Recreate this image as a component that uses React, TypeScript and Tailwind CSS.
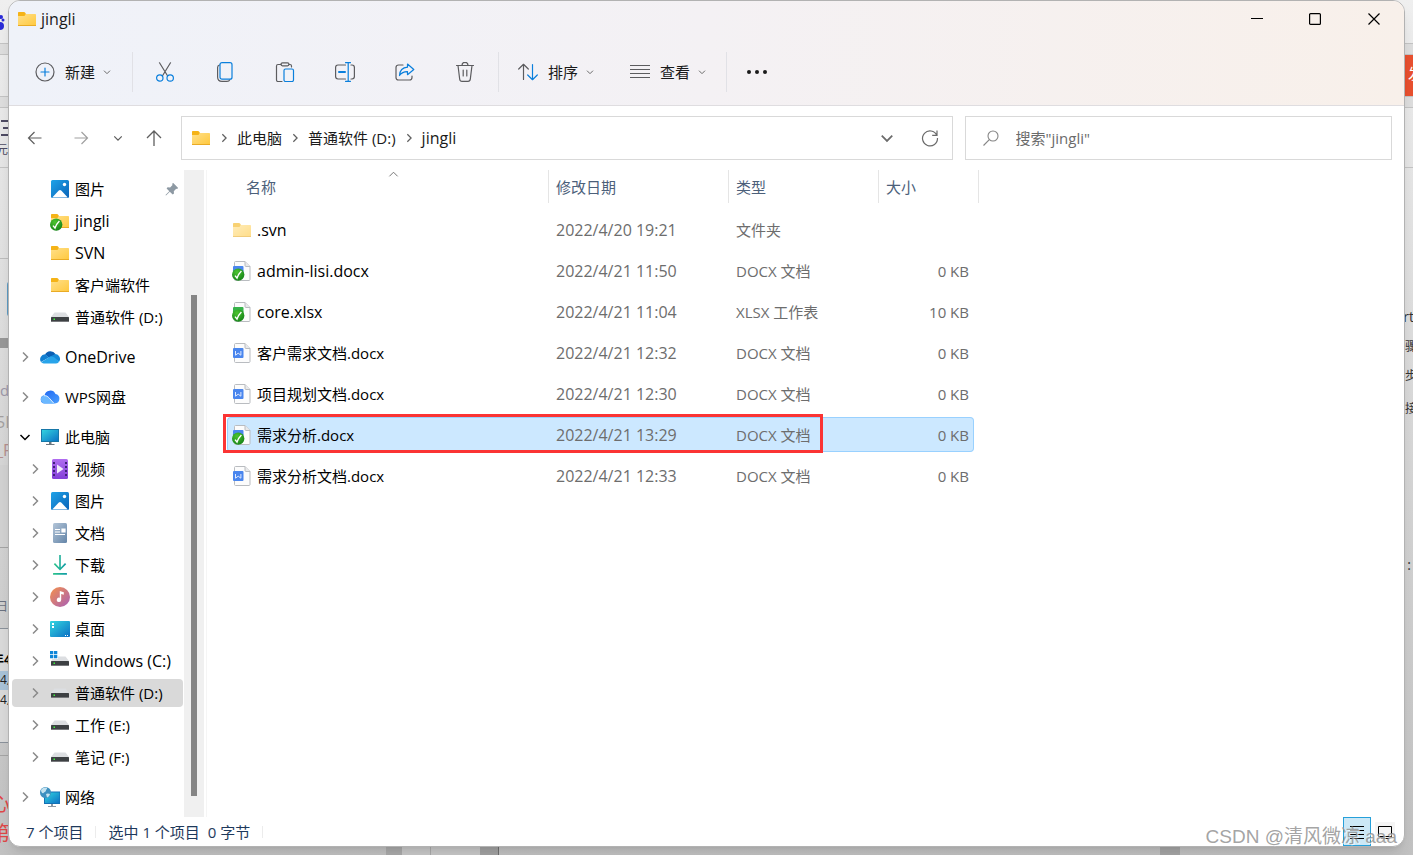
import type { ReactNode } from "react";

type Badge = "none" | "synced";
type FileKind = "folder" | "docx" | "xlsx";

interface FileRow {
  name: string;
  date: string;
  type: string;
  size: string;
  kind: FileKind;
  badge?: Badge;
  selected?: boolean;
}

interface TreeRow {
  label: string;
  icon: ReactNode;
  nested?: boolean;
  arrow?: "right" | "down";
  selected?: boolean;
  pinned?: boolean;
}

const files: FileRow[] = [
  { name: ".svn", date: "2022/4/20 19:21", type: "文件夹", size: "", kind: "folder" },
  { name: "admin-lisi.docx", date: "2022/4/21 11:50", type: "DOCX 文档", size: "0 KB", kind: "docx", badge: "synced" },
  { name: "core.xlsx", date: "2022/4/21 11:04", type: "XLSX 工作表", size: "10 KB", kind: "xlsx", badge: "synced" },
  { name: "客户需求文档.docx", date: "2022/4/21 12:32", type: "DOCX 文档", size: "0 KB", kind: "docx" },
  { name: "项目规划文档.docx", date: "2022/4/21 12:30", type: "DOCX 文档", size: "0 KB", kind: "docx" },
  { name: "需求分析.docx", date: "2022/4/21 13:29", type: "DOCX 文档", size: "0 KB", kind: "docx", badge: "synced", selected: true },
  { name: "需求分析文档.docx", date: "2022/4/21 12:33", type: "DOCX 文档", size: "0 KB", kind: "docx" },
];

// labels without any Chinese characters are set one step larger
const latinSize = (s: string) => (/^[\x20-\x7e]+$/.test(s) ? "text-[16px]" : "");

/* ---------- icons ---------- */

function Gradients() {
  return (
    <svg width="0" height="0" className="absolute" aria-hidden="true">
      <defs>
        <linearGradient id="gFolder" x1="0" y1="0" x2="1" y2="1">
          <stop offset="0" stopColor="#ffe08a" />
          <stop offset="1" stopColor="#ffc83d" />
        </linearGradient>
        <linearGradient id="gPicture" x1="0" y1="0" x2="1" y2="1">
          <stop offset="0" stopColor="#1fa3e8" />
          <stop offset="1" stopColor="#0a63b8" />
        </linearGradient>
        <linearGradient id="gScreen" x1="0" y1="0" x2="1" y2="1">
          <stop offset="0" stopColor="#33d6e0" />
          <stop offset="1" stopColor="#0b6fc4" />
        </linearGradient>
        <linearGradient id="gVideo" x1="0" y1="0" x2="0" y2="1">
          <stop offset="0" stopColor="#b06cf0" />
          <stop offset="1" stopColor="#8340d8" />
        </linearGradient>
        <linearGradient id="gDoc" x1="0" y1="0" x2="1" y2="1">
          <stop offset="0" stopColor="#b3c5d8" />
          <stop offset="1" stopColor="#6485a8" />
        </linearGradient>
        <linearGradient id="gMusic" x1="0" y1="0" x2="1" y2="1">
          <stop offset="0" stopColor="#f5914a" />
          <stop offset="1" stopColor="#a85fb8" />
        </linearGradient>
        <linearGradient id="gDown" x1="0" y1="0" x2="1" y2="0">
          <stop offset="0" stopColor="#2cc48a" />
          <stop offset="1" stopColor="#0f9aa8" />
        </linearGradient>
        <radialGradient id="gCheck" cx="0.4" cy="0.3" r="0.8">
          <stop offset="0" stopColor="#4cc42f" />
          <stop offset="1" stopColor="#0f7d16" />
        </radialGradient>
        <linearGradient id="gWps" x1="0" y1="0" x2="1" y2="1">
          <stop offset="0" stopColor="#1c62f0" />
          <stop offset="1" stopColor="#4ba0ff" />
        </linearGradient>
      </defs>
    </svg>
  );
}

function CheckBadge() {
  return (
    <>
      <circle cx="6.2" cy="13.6" r="6.2" fill="url(#gCheck)" />
      <path d="M3 14.6l2 2.400c1-2.900 2.200-4.800 4.400-7" fill="none" stroke="#fff" strokeWidth="1.400" />
    </>
  );
}

function FolderIcon({ badge = "none", faded = false }: { badge?: Badge; faded?: boolean }) {
  return (
    <svg viewBox="0 0 20 20" className={faded ? "h-5 w-5 opacity-60" : "h-5 w-5"} aria-hidden="true">
      <path d="M1 4c0-.7.4-1 1-1h5c.5 0 .8.2 1 .5L9 5v4H1z" fill="#f5b317" />
      <path d="M1 7h6.500l1.200-2H18c.6 0 1 .4 1 1v11H1z" fill="url(#gFolder)" />
      <path d="M1 16h18v1H1z" fill="#e9ab25" />
      {badge === "synced" && <CheckBadge />}
    </svg>
  );
}

function FileIcon({ kind, badge = "none" }: { kind: FileKind; badge?: Badge }) {
  if (kind === "folder") return <FolderIcon faded />;
  return (
    <svg viewBox="0 0 20 20" className="h-5 w-5" aria-hidden="true">
      <path d="M2.500 1.500c0-.6.4-1 1-1H13l5 5v13c0 .6-.4 1-1 1H3.500c-.6 0-1-.4-1-1z" fill="#fcfcfc" stroke="#b9bcc0" />
      <path d="M13 .5v4c0 .6.4 1 1 1h4" fill="#e8e9eb" stroke="#b9bcc0" />
      <rect x="1" y="5" width="10.500" height="10" rx="1" fill={kind === "docx" ? "#4a86ee" : "#37b34a"} />
      {badge === "synced" ? (
        <CheckBadge />
      ) : (
        <path d="M3.500 8v4.200l2.700-2 2.700 2V8" fill="none" stroke="#dfeaff" strokeWidth="1" />
      )}
    </svg>
  );
}

function PictureIcon() {
  return (
    <svg viewBox="0 0 20 20" className="h-5 w-5" aria-hidden="true">
      <rect x="1" y="1" width="18" height="18" rx="1.500" fill="url(#gPicture)" />
      <path d="M2.200 18.600L8.800 11.400c.7-.7 1.700-.7 2.400 0l6.600 7.200z" fill="#fff" />
      <circle cx="14.500" cy="5.500" r="1.700" fill="#fff" />
    </svg>
  );
}

function DriveIcon({ system = false }: { system?: boolean }) {
  return (
    <svg viewBox="0 0 20 20" className="h-5 w-5" aria-hidden="true">
      <path d="M4.500 5.500h11L19 10H1z" fill="#dcdee1" />
      <rect x="1" y="10" width="18" height="5" rx=".5" fill="#3d4043" />
      <path d="M1 14h18v1H1z" fill="#77797c" />
      <rect x="3.500" y="11.500" width="1.500" height="1.500" fill="#3df03d" />
      {system && (
        <>
          <rect width="8" height="8" fill="#fff" />
          <path d="M0 0h3.300v3.300H0zM4 0h3.300v3.300H4zM0 4h3.300v3.300H0zM4 4h3.300v3.300H4z" fill="#0f86d8" />
        </>
      )}
    </svg>
  );
}

function OneDriveIcon() {
  return (
    <svg viewBox="0 0 20 20" className="h-5 w-5" aria-hidden="true">
      <path d="M5 7.500A6 6 0 0 1 15.500 7l-5 5z" fill="#0a5fb4" />
      <path d="M5 7.200A5 5 0 0 0 1 15l8-4.500z" fill="#1180d2" />
      <path d="M15.500 7a5 5 0 0 1 3.800 7.500L9 10z" fill="#1489d8" />
      <path d="M1.200 15.200L9.500 10c1.500-.7 3.300-.6 4.600.3l5 4.300c-.5 1.300-1.600 1.900-3.100 1.900H5c-1.600 0-3-.4-3.800-1.300z" fill="#28a4ea" />
    </svg>
  );
}

function WpsCloudIcon() {
  return (
    <svg viewBox="0 0 20 20" className="h-5 w-5" aria-hidden="true">
      <path d="M4.500 8.500A5.800 5.800 0 0 1 15.500 7 4.800 4.800 0 0 1 15 16.500H5A4 4 0 0 1 4.500 8.500z" fill="url(#gWps)" />
      <path d="M.8 12.300A4 4 0 0 1 8 10l6.500 6.500H5a4.200 4.200 0 0 1-4.200-4.200z" fill="#6bb8ff" />
      <path d="M4 8.700c2.300-.2 3.600.6 4.900 2l4.900 5.500" fill="none" stroke="#fff" strokeWidth=".8" />
    </svg>
  );
}

function PcIcon() {
  return (
    <svg viewBox="0 0 20 20" className="h-5 w-5" aria-hidden="true">
      <rect x="1.500" y="2.500" width="17" height="12" fill="url(#gScreen)" stroke="#1777a8" />
      <path d="M9 15h2.500v2H9zM6 17h8.500v1H6z" fill="#6b7680" />
    </svg>
  );
}

function VideoIcon() {
  return (
    <svg viewBox="0 0 20 20" className="h-5 w-5" aria-hidden="true">
      <rect x="2" width="16" height="20" rx="1.500" fill="url(#gVideo)" />
      <path d="M3 3h2v2H3zM3 7h2v2H3zM3 11h2v2H3zM3 15h2v2H3zM15 3h2v2h-2zM15 7h2v2h-2zM15 11h2v2h-2zM15 15h2v2h-2z" fill="#40207a" />
      <path d="M7 5.500l6.500 4.500L7 14.500z" fill="#f2ecfb" />
    </svg>
  );
}

function DocumentsIcon() {
  return (
    <svg viewBox="0 0 20 20" className="h-5 w-5" aria-hidden="true">
      <rect x="3" width="14" height="20" rx="1.500" fill="url(#gDoc)" />
      <path d="M5 6.500h5M5 9h5M5 11.500h10M12 6h3v3h-3z" stroke="#fff" strokeWidth="1.200" fill="#fff" />
    </svg>
  );
}

function DownloadIcon() {
  return (
    <svg viewBox="0 0 20 20" className="h-5 w-5" fill="url(#gDown)" aria-hidden="true">
      <path d="M9.200 0h1.600v12.500l4.200-4.400 1.200 1.100L10 15.600 3.800 9.200 5 8.100l4.200 4.400z" />
      <rect x="3" y="18" width="14" height="1.700" rx=".5" />
    </svg>
  );
}

function MusicIcon() {
  return (
    <svg viewBox="0 0 20 20" className="h-5 w-5" aria-hidden="true">
      <circle cx="10" cy="10" r="10" fill="url(#gMusic)" />
      <path d="M9.800 4l4 1.200v2.600l-2.600-.8v5.700a2.200 2.200 0 1 1-1.400-2z" fill="#fff" />
    </svg>
  );
}

function DesktopIcon() {
  return (
    <svg viewBox="0 0 20 20" className="h-5 w-5" aria-hidden="true">
      <rect y="2" width="20" height="16" rx="1" fill="url(#gScreen)" />
      <path d="M2 4h2v2H2zM2 7h2v2H2z" fill="#fff" />
      <path d="M15 16h1v1h-1zM17 16h1v1h-1z" fill="#fff" />
    </svg>
  );
}

function NetworkIcon() {
  return (
    <svg viewBox="0 0 20 20" className="h-5 w-5" aria-hidden="true">
      <rect x="4.500" y="5" width="15.500" height="11.500" fill="url(#gScreen)" stroke="#1371b5" />
      <path d="M11 17h2v2h-2zM8 19h8v1H8z" fill="#8a97a3" />
      <circle cx="5.500" cy="5.500" r="5.500" fill="#3d8fbf" />
      <path d="M1 3c2-2.500 5-3 6-2 .5 1-1 1.500-1 2.500S4.500 5 3.500 6 1 5 1 3zM6 7c1.500-1 3-.5 4 0-.5 2-1.500 3-3 3.500z" fill="#c4e2ef" />
    </svg>
  );
}

function Chevron({ dir, className }: { dir: "right" | "down" | "up"; className: string }) {
  const d = { right: "M4 1.500L8.500 6 4 10.500", down: "M1.500 4L6 8.500 10.500 4", up: "M1.500 8L6 3.500 10.500 8" }[dir];
  return (
    <svg viewBox="0 0 12 12" className={className} fill="none" stroke="currentColor" strokeWidth="1.500" aria-hidden="true">
      <path d={d} />
    </svg>
  );
}

/* thin two-tone glyphs of the command bar */
function ToolIcon({ children }: { children: ReactNode }) {
  return (
    <svg viewBox="0 0 20 20" className="h-5 w-5 shrink-0" fill="none" stroke="#5c5c5f" strokeWidth="1.200" strokeLinecap="round" strokeLinejoin="round" aria-hidden="true">
      {children}
    </svg>
  );
}

const blue = "#0a7fdc";

const tools = [
  {
    label: "剪切",
    icon: (
      <ToolIcon>
        <path d="M4.500.8l8 13M15.500.8l-8 13" />
        <circle cx="4.800" cy="16" r="3.200" stroke={blue} />
        <circle cx="15.200" cy="16" r="3.200" stroke={blue} />
      </ToolIcon>
    ),
  },
  {
    label: "复制",
    icon: (
      <ToolIcon>
        <path d="M4.500 3C3 3.400 2.600 4.300 2.600 5.500v9.500c0 3 1.400 4.400 4.400 4.400h5c1.400 0 2.300-.4 2.800-1.600" />
        <rect x="5" y=".7" width="12" height="16.500" rx="2" stroke={blue} />
      </ToolIcon>
    ),
  },
  {
    label: "粘贴",
    icon: (
      <ToolIcon>
        <path d="M6 2.500H3c-1 0-1.500.5-1.500 1.500v14c0 1 .5 1.500 1.500 1.500h4M14 2.500h1c1 0 1.500.5 1.500 1.500v1" />
        <rect x="6" y=".8" width="8" height="3" rx="1.500" />
        <rect x="9" y="7" width="9.500" height="12.500" rx="1.500" stroke={blue} />
      </ToolIcon>
    ),
  },
  {
    label: "重命名",
    icon: (
      <ToolIcon>
        <path d="M10.500 3H3C1.500 3 .6 3.900.6 5.400v9.200c0 1.500.9 2.400 2.400 2.400h7.500M16 3h1c1.500 0 2.400.9 2.400 2.400v9.200c0 1.500-.9 2.400-2.400 2.400h-1" />
        <path d="M10.500.7h5M13.200.7v18.600M10.500 19.300h5" stroke={blue} />
        <path d="M4 10h6" stroke={blue} strokeWidth="2" />
      </ToolIcon>
    ),
  },
  {
    label: "共享",
    icon: (
      <ToolIcon>
        <path d="M8 3H3.500C2 3 1 4 1 5.500v10C1 17 2 18 3.500 18h11c1.500 0 2.500-1 2.500-2.500V14" />
        <path d="M12.500 2l6.300 5.500-6.300 5.200V9.700C9 9.600 6.500 10.800 4.500 13.500c.3-5 3.500-8 8-8.300z" stroke={blue} />
      </ToolIcon>
    ),
  },
  {
    label: "删除",
    icon: (
      <ToolIcon>
        <path d="M1.500 3.500h17M7 3.300a3 3 0 0 1 6 0M3 3.500l1.700 13.700c.2 1.500 1 2.200 2.300 2.200h6c1.300 0 2.100-.7 2.300-2.200L17 3.500M8.200 8v6M11.800 8v6" />
      </ToolIcon>
    ),
  },
];

/* ---------- sidebar ---------- */

const treeGroups: TreeRow[][] = [
  [
    { label: "图片", icon: <PictureIcon />, nested: true, pinned: true },
    { label: "jingli", icon: <FolderIcon badge="synced" />, nested: true },
    { label: "SVN", icon: <FolderIcon />, nested: true },
    { label: "客户端软件", icon: <FolderIcon />, nested: true },
    { label: "普通软件 (D:)", icon: <DriveIcon />, nested: true },
  ],
  [{ label: "OneDrive", icon: <OneDriveIcon />, arrow: "right" }],
  [{ label: "WPS网盘", icon: <WpsCloudIcon />, arrow: "right" }],
  [
    { label: "此电脑", icon: <PcIcon />, arrow: "down" },
    { label: "视频", icon: <VideoIcon />, nested: true, arrow: "right" },
    { label: "图片", icon: <PictureIcon />, nested: true, arrow: "right" },
    { label: "文档", icon: <DocumentsIcon />, nested: true, arrow: "right" },
    { label: "下载", icon: <DownloadIcon />, nested: true, arrow: "right" },
    { label: "音乐", icon: <MusicIcon />, nested: true, arrow: "right" },
    { label: "桌面", icon: <DesktopIcon />, nested: true, arrow: "right" },
    { label: "Windows (C:)", icon: <DriveIcon system />, nested: true, arrow: "right" },
    { label: "普通软件 (D:)", icon: <DriveIcon />, nested: true, arrow: "right", selected: true },
    { label: "工作 (E:)", icon: <DriveIcon />, nested: true, arrow: "right" },
    { label: "笔记 (F:)", icon: <DriveIcon />, nested: true, arrow: "right" },
  ],
  [{ label: "网络", icon: <NetworkIcon />, arrow: "right" }],
];

function TreeItem({ row }: { row: TreeRow }) {
  return (
    <li className="py-[2px] pr-px pl-[3px]">
      <button
        type="button"
        className={`flex h-7 w-full items-center rounded-sm text-left ${row.nested ? "pl-[17px]" : "pl-[7px]"} ${row.selected ? "bg-[#d9d9d9]" : ""}`}
      >
        <span className="mr-[9px] w-3 shrink-0">
          {row.arrow && (
            <Chevron dir={row.arrow} className={row.arrow === "down" ? "h-3 w-3 text-black" : "h-3 w-3 text-[#8a8a8a]"} />
          )}
        </span>
        <span className="mr-[5px] shrink-0">{row.icon}</span>
        <span className={`whitespace-nowrap ${latinSize(row.label)}`}>{row.label}</span>
        {row.pinned && (
          <svg viewBox="0 0 14 14" className="mr-1 ml-auto h-[14px] w-[14px]" fill="#8d99a3" aria-hidden="true">
            <path d="M8 .8L13.200 6l-1.200.9-.8-.2-2.400 2.500.2 2.400-1.300 1L4.800 9.700 1 13.500l-.5-.5 3.800-3.800L1.600 6.500l1-1.200 2.500.2 2.400-2.500-.3-1z" />
          </svg>
        )}
      </button>
    </li>
  );
}

function Sidebar() {
  return (
    <aside className="flex w-[198px] shrink-0 border-r border-[#f5f5f5]">
      <nav className="flex-1 pt-[3px]" aria-label="导航窗格">
        {treeGroups.map((group, i) => (
          <ul key={i} className="mb-2 last:mb-1">
            {group.map((row) => (
              <TreeItem key={row.label} row={row} />
            ))}
          </ul>
        ))}
      </nav>
      <div className="mr-[2px] flex w-5 justify-center bg-[#f0f0f0] pt-[125px] pb-[21px]">
        <div className="w-[6px] bg-[#858585]" />
      </div>
    </aside>
  );
}

/* ---------- window parts ---------- */

function TitleBar() {
  return (
    <div className="flex h-9 items-center pl-2">
      <FolderIcon />
      <h1 className="ml-1 text-[16px] text-[#1a1a1a]">jingli</h1>
      <div className="ml-auto flex">
        <button type="button" aria-label="最小化" className="flex h-9 w-[58px] items-center justify-center">
          <svg viewBox="0 0 12 12" className="h-3 w-3" stroke="#000"><path d="M0 5.500h12" /></svg>
        </button>
        <button type="button" aria-label="最大化" className="flex h-9 w-[58px] items-center justify-center">
          <svg viewBox="0 0 12 12" className="h-3 w-3" fill="none" stroke="#000"><rect x=".6" y=".6" width="10.800" height="10.800" rx="1" strokeWidth="1.200" /></svg>
        </button>
        <button type="button" aria-label="关闭" className="flex h-9 w-[60px] items-center justify-center">
          <svg viewBox="0 0 12 12" className="h-3 w-3" stroke="#000" strokeWidth="1.200"><path d="M.5.5l11 11M11.500.5l-11 11" /></svg>
        </button>
      </div>
    </div>
  );
}

function Divider() {
  return <div className="h-10 w-px shrink-0 bg-[#e1e1e6]" />;
}

function CommandBar() {
  return (
    <div className="flex h-[68px] items-center pt-[2px] pl-[26px] text-[#1a1a1a]">
      <button type="button" className="mr-[21px] flex items-center">
        <ToolIcon>
          <circle cx="10" cy="10" r="9" />
          <path d="M10 6v8M6 10h8" stroke={blue} />
        </ToolIcon>
        <span className="mr-2 ml-[10px]">新建</span>
        <Chevron dir="down" className="h-2 w-2 text-[#6b6b6b]" />
      </button>
      <Divider />
      <div className="mr-[3px] ml-[2px] flex">
        {tools.map((t) => (
          <button key={t.label} type="button" aria-label={t.label} className="flex h-10 w-[60px] items-center justify-center">
            {t.icon}
          </button>
        ))}
      </div>
      <Divider />
      <button type="button" className="ml-[19px] flex items-center">
        <ToolIcon>
          <path d="M5.500 17.500v-15M.7 7l4.800-4.700L10.300 7" />
          <path d="M14.500 2.500v15M9.700 13l4.800 4.700 4.800-4.700" stroke={blue} />
        </ToolIcon>
        <span className="mr-2 ml-[10px]">排序</span>
        <Chevron dir="down" className="h-2 w-2 text-[#6b6b6b]" />
      </button>
      <button type="button" className="mr-5 ml-9 flex items-center">
        <ToolIcon>
          <path d="M0 3.500h20M0 7.500h20M0 11.500h20M0 15.500h20" />
        </ToolIcon>
        <span className="mr-2 ml-[10px]">查看</span>
        <Chevron dir="down" className="h-2 w-2 text-[#6b6b6b]" />
      </button>
      <Divider />
      <button type="button" aria-label="更多" className="ml-5 flex items-center">
        <svg viewBox="0 0 20 20" className="h-5 w-5" fill="#1a1a1a" aria-hidden="true">
          <circle cx="2" cy="10" r="2" />
          <circle cx="10" cy="10" r="2" />
          <circle cx="18" cy="10" r="2" />
        </svg>
      </button>
    </div>
  );
}

function AddressRow() {
  const crumbs = ["此电脑", "普通软件 (D:)", "jingli"];
  return (
    <div className="flex items-center gap-3 py-[10px] pr-3">
      <div className="flex w-40 shrink-0 items-center pl-4 text-[#5f5f5f]">
        <button type="button" aria-label="后退" className="mr-[26px]">
          <svg viewBox="0 0 20 20" className="h-5 w-5" fill="none" stroke="currentColor" strokeWidth="1.200"><path d="M16.500 10h-13M9.500 4l-6 6 6 6" /></svg>
        </button>
        <button type="button" aria-label="前进" className="mr-[22px] text-[#a0a0a0]">
          <svg viewBox="0 0 20 20" className="h-5 w-5" fill="none" stroke="currentColor" strokeWidth="1.200"><path d="M3.500 10h13M10.500 4l6 6-6 6" /></svg>
        </button>
        <button type="button" aria-label="最近浏览的位置" className="mr-[21px]">
          <Chevron dir="down" className="h-[10px] w-[10px]" />
        </button>
        <button type="button" aria-label="上移">
          <svg viewBox="0 0 20 20" className="h-5 w-5" fill="none" stroke="currentColor" strokeWidth="1.300"><path d="M10 18V3M3 10l7-7 7 7" /></svg>
        </button>
      </div>
      <div className="flex h-11 flex-13 items-center border border-[#d9d9d9] pl-[9px]">
        <FolderIcon />
        {crumbs.map((c) => (
          <span key={c} className="flex items-center">
            <Chevron dir="right" className="mx-2 h-[10px] w-[10px] text-[#5f5f5f]" />
            <a href="#" className={`text-[#1a1a1a] ${latinSize(c)}`}>{c}</a>
          </span>
        ))}
        <button type="button" aria-label="以前的位置" className="mr-[26px] ml-auto text-[#6b6b6b]">
          <Chevron dir="down" className="h-[14px] w-[14px]" />
        </button>
        <button type="button" aria-label="刷新" className="mr-3">
          <svg viewBox="0 0 20 20" className="h-5 w-5" fill="none" stroke="#6b6b6b" strokeWidth="1.200"><path d="M16.800 7.200A7.500 7.500 0 1 0 17.500 10M17 2.500v4.800h-4.800" /></svg>
        </button>
      </div>
      <label className="flex h-11 flex-7 items-center border border-[#d9d9d9] pl-4">
        <svg viewBox="0 0 18 18" className="h-[18px] w-[18px] shrink-0" fill="none" stroke="#858585" strokeWidth="1.100" aria-hidden="true">
          <circle cx="11" cy="7" r="5" />
          <path d="M7.300 10.700L1.500 16.500" />
        </svg>
        <input
          type="text"
          aria-label="搜索"
          placeholder={'搜索"jingli"'}
          className="ml-4 w-full min-w-0 bg-transparent outline-none placeholder:text-[#6b6b6b]"
        />
      </label>
    </div>
  );
}

function FileTable() {
  const fill = (f: FileRow) => (f.selected ? "border-[#99d1ff] bg-[#cce8ff]" : "border-transparent");
  return (
    <table className="ml-5 w-[752px] table-fixed border-separate border-spacing-0 self-start">
      <colgroup>
        <col className="w-[322px]" />
        <col className="w-[180px]" />
        <col className="w-[150px]" />
        <col className="w-[100px]" />
      </colgroup>
      <thead>
        <tr className="h-[39px] text-left align-top text-[#4c607a]">
          {["名称", "修改日期", "类型", "大小"].map((h, i) => (
            <th key={h} className="relative p-0 font-normal">
              <div className={`flex h-[33px] items-center border-r border-[#e5e5e5] ${i === 0 ? "pl-[19px]" : "pl-[7px]"}`}>{h}</div>
              {i === 0 && <Chevron dir="up" className="absolute -top-px left-[161px] h-[11px] w-[11px] stroke-1 text-[#6b6b6b]" />}
            </th>
          ))}
        </tr>
      </thead>
      <tbody>
        {files.map((f) => (
          <tr key={f.name} className="h-[41px] whitespace-nowrap text-[#6d6d6d]">
            <td className="relative p-0">
              <div className={`flex h-[35px] items-center rounded-l-sm border-y border-l pl-1 text-black ${fill(f)}`}>
                <FileIcon kind={f.kind} badge={f.badge} />
                <span className={`ml-[5px] ${latinSize(f.name)}`}>{f.name}</span>
              </div>
              {f.selected && (
                <div className="pointer-events-none absolute top-0 -left-1 h-[39px] w-[600px] border-[3px] border-[#fb3434]" />
              )}
            </td>
            <td className="p-0">
              <div className={`flex h-[35px] items-center border-y pl-[7px] text-[16px] ${fill(f)}`}>{f.date}</div>
            </td>
            <td className="p-0">
              <div className={`flex h-[35px] items-center border-y pl-[7px] ${fill(f)}`}>{f.type}</div>
            </td>
            <td className="p-0 pr-[5px]">
              <div className={`flex h-[35px] items-center justify-end rounded-r-sm border-y border-r pr-1 ${fill(f)}`}>{f.size}</div>
            </td>
          </tr>
        ))}
      </tbody>
    </table>
  );
}

function StatusBar() {
  return (
    <footer className="flex h-[29px] shrink-0 items-center pl-[17px] text-[#1e395b]">
      <span>7 个项目</span>
      <span className="mx-3 h-3 w-px bg-[#ececec]" />
      <span>选中 1 个项目</span>
      <span className="ml-2">0 字节</span>
      <span className="mx-3 h-3 w-px bg-[#ececec]" />
      <div className="mr-[9px] ml-auto flex items-center gap-1">
        <button type="button" aria-label="详细信息" className="flex h-[29px] w-7 items-center justify-center border border-[#26a0da] bg-[#cce8f6]">
          <svg viewBox="0 0 14 14" className="h-[14px] w-[14px]" stroke="#000"><path d="M0 1.500h14M0 5.500h14M0 9.500h14M0 13.500h14" /></svg>
        </button>
        <button type="button" aria-label="大图标" className="flex h-5 w-5 items-center justify-center bg-[#f5f5f5]">
          <svg viewBox="0 0 14 14" className="h-[14px] w-[14px]" fill="none" stroke="#000"><path d="M.5 1.500h13v10H.5zM3 13.500h8" /></svg>
        </button>
      </div>
    </footer>
  );
}

/* page that peeks out around the window edges */
function Backdrop() {
  return (
    <div className="absolute inset-0 overflow-hidden bg-linear-to-b from-[#efefef] via-[#d8d8d8] to-[#c2c2c2] text-[15px] whitespace-nowrap" aria-hidden="true">
      <div className="absolute top-[43px] h-3 w-full border-y border-[#c4c4c4] bg-[#dedede]" />
      <div className="absolute top-[96px] h-3 w-full border-y border-[#c4c4c4] bg-[#dedede]" />
      <div className="absolute top-[167px] h-px w-full bg-[#c4c4c4]" />
      <div className="absolute top-[258px] h-px w-5 bg-[#bdbdbd]" />
      <div className="absolute top-[338px] h-[10px] w-5 bg-[#989898]" />
      <div className="absolute top-[465px] h-[83px] w-5 border-b border-[#a5a5a5] bg-[#d2d2d2]" />
      <div className="absolute top-[628px] h-[115px] w-5 border-y border-[#8b929b] bg-[#dadada]" />
      <div className="absolute top-[671px] h-[19px] w-5 bg-[#a9c3d8]" />
      <div className="absolute top-[755px] h-px w-5 bg-[#a5a5a5]" />
      <div className="absolute top-[281px] left-[7px] h-9 w-3 rounded-sm bg-[#5c9bc4]" />
      <svg viewBox="0 0 9 20" className="absolute top-3 left-0 h-5 w-[9px]" fill="#2a2bd8">
        <circle cx="1" cy="5" r="2" />
        <circle cx="3" cy="8" r="1.500" />
        <circle cx="0" cy="14" r="4" />
      </svg>
      <svg viewBox="0 0 8 16" className="absolute top-[120px] left-px h-4 w-2" stroke="#4d4a62" strokeWidth="2">
        <path d="M0 1h8M2 8h6M0 15h8" />
      </svg>
      <span className="absolute top-[142px] -left-1 text-xs text-[#4d4a62]">元成</span>
      <span className="absolute top-[380px] left-0 text-[#9c97a8]">d</span>
      <span className="absolute top-[410px] -left-1 text-base text-[#a3a0a0]">5L</span>
      <span className="absolute top-[438px] -left-1 text-base text-[#b58f8f]">_F</span>
      <span className="absolute top-[599px] -left-1 text-xs text-[#6b7280]">日期</span>
      <span className="absolute top-[652px] -left-2 text-xs font-bold text-black">年4</span>
      <span className="absolute top-[672px] left-0 text-xs text-[#222]">4月</span>
      <span className="absolute top-[692px] left-0 text-xs text-[#222]">4月</span>
      <span className="absolute top-[790px] -left-[10px] text-xl text-[#e04848]">心</span>
      <span className="absolute top-[820px] -left-[10px] text-xl text-[#e04848]">第</span>
      <div className="absolute top-[55px] right-0 h-[41px] w-[9px] overflow-hidden bg-[#e9502f]">
        <span className="absolute top-2 left-1 text-white">发</span>
      </div>
      <span className="absolute top-[307px] -right-px text-sm text-[#333]">rt</span>
      <span className="absolute top-[339px] -right-1 text-xs text-[#333]">骤</span>
      <span className="absolute top-[368px] -right-1 text-xs text-[#333]">步</span>
      <span className="absolute top-[401px] -right-1 text-xs text-[#333]">接</span>
      <span className="absolute top-[555px] right-[2px] text-sm text-[#333]">:</span>
      <div className="absolute bottom-0 left-[386px] h-3 w-4 bg-[#ababab]" />
      <div className="absolute bottom-0 left-[402px] h-3 w-[78px] bg-[#c9c9c9]" />
      <div className="absolute bottom-0 left-[430px] h-3 w-px bg-[#ababab]" />
      <div className="absolute bottom-0 left-[480px] h-3 w-[19px] border-r border-[#6f6f6f] bg-[#a3a3a3]" />
      <div className="absolute right-[233px] bottom-0 h-3 w-5 bg-[#a6a6a6]" />
    </div>
  );
}

export default function App() {
  return (
    <div className="relative flex min-h-screen px-2 pb-2 font-['Open_Sans','Noto_Sans_CJK_SC',sans-serif] text-[15px] leading-5 text-black">
      <Gradients />
      <Backdrop />
      <main className="relative flex min-w-0 flex-1 flex-col overflow-hidden rounded-xl border border-[#b2b2b2] bg-white shadow-lg">
        <header className="border-b border-[#dfdde0] bg-linear-to-r from-[#eff2f9] via-[#f4f1f4] to-[#f8f0ea]">
          <TitleBar />
          <CommandBar />
        </header>
        <AddressRow />
        <div className="flex flex-1">
          <Sidebar />
          <FileTable />
        </div>
        <StatusBar />
      </main>
      <p className="pointer-events-none absolute right-4 bottom-[6px] font-['Liberation_Sans','Noto_Sans_CJK_SC',sans-serif] text-[19px] leading-6 text-[#8c8c8ccc] [text-shadow:1px_1px_0_#ffffffaa]">
        CSDN @清风微凉 aaa
      </p>
    </div>
  );
}
